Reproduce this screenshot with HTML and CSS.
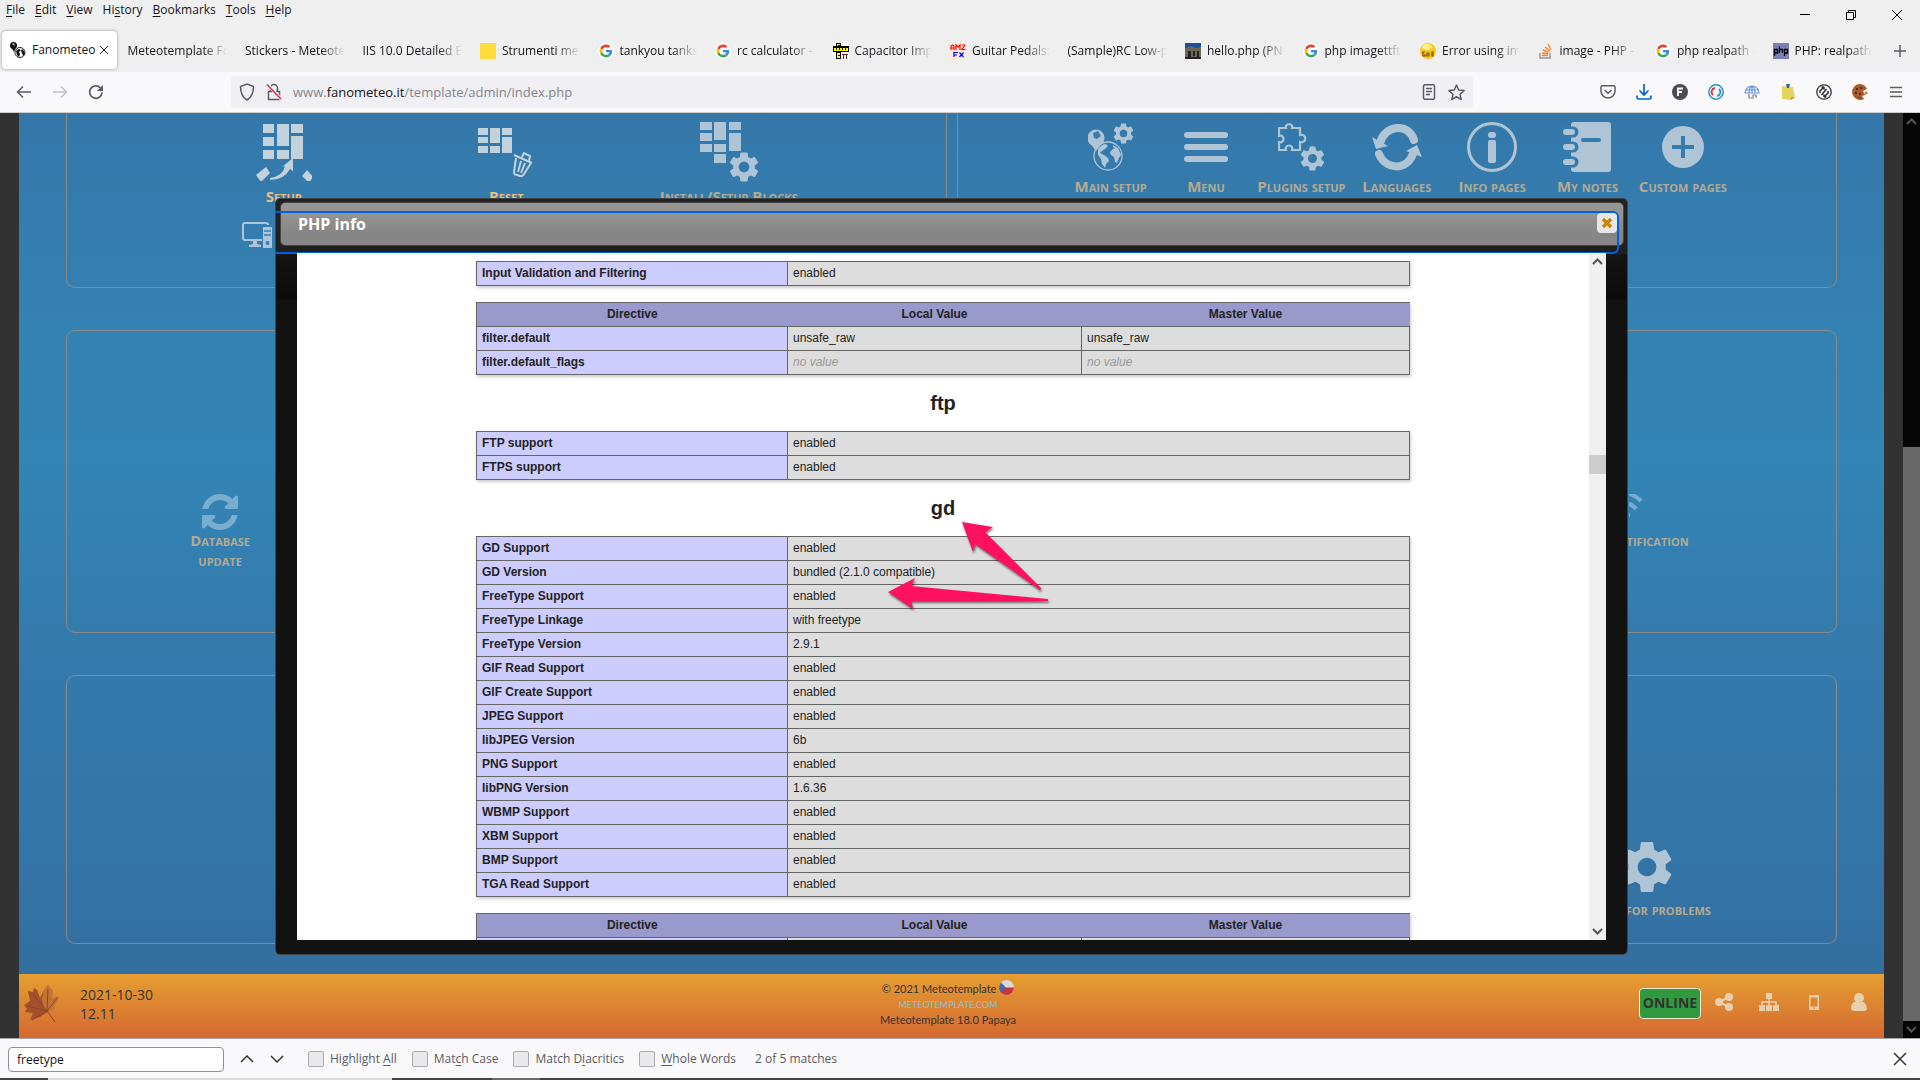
FILE: index.html
```html
<!DOCTYPE html>
<html lang="en">
<head>
<meta charset="utf-8">
<title>Fanometeo</title>
<link rel="stylesheet" href="styles.css">
</head>
<body>
<svg class="sprite" aria-hidden="true">
  <symbol id="gear" viewBox="2 2 20 20"><path fill-rule="evenodd" d="M19.14 12.94c.04-.3.06-.61.06-.94 0-.32-.02-.64-.07-.94l2.03-1.58c.18-.14.23-.41.12-.61l-1.92-3.32c-.12-.22-.37-.29-.59-.22l-2.39.96c-.5-.38-1.03-.7-1.62-.94L14.4 2.81c-.04-.24-.24-.41-.48-.41h-3.84c-.24 0-.43.17-.47.41L9.25 5.35c-.59.24-1.13.57-1.62.94l-2.39-.96c-.22-.08-.47 0-.59.22L2.74 8.87c-.12.21-.08.47.12.61l2.03 1.58c-.05.3-.09.63-.09.94s.02.64.07.94l-2.03 1.58c-.18.14-.23.41-.12.61l1.92 3.32c.12.22.37.29.59.22l2.39-.96c.5.38 1.03.7 1.62.94l.36 2.54c.05.24.24.41.48.41h3.84c.24 0 .44-.17.47-.41l.36-2.54c.59-.24 1.13-.56 1.62-.94l2.39.96c.22.08.47 0 .59-.22l1.92-3.32c.12-.22.07-.47-.12-.61zM12 15.6a3.6 3.6 0 1 1 0-7.2 3.6 3.6 0 0 1 0 7.2z"/></symbol>
  <symbol id="google" viewBox="-6 -6 60 60"><circle cx="24" cy="24" r="30" fill="#fff"/><path fill="#EA4335" d="M24 9.500c3.540 0 6.710 1.220 9.210 3.600l6.850-6.850C35.900 2.380 30.470 0 24 0 14.620 0 6.510 5.380 2.560 13.220l7.980 6.190C12.430 13.720 17.740 9.500 24 9.500z"/><path fill="#4285F4" d="M46.980 24.550c0-1.570-.15-3.090-.38-4.550H24v9.020h12.940c-.58 2.960-2.260 5.480-4.780 7.180l7.730 6c4.510-4.180 7.090-10.360 7.090-17.650z"/><path fill="#FBBC05" d="M10.530 28.590c-.48-1.450-.76-2.990-.76-4.590s.27-3.140.76-4.590l-7.980-6.190C.92 16.460 0 20.120 0 24s.92 7.540 2.560 10.780z"/><path fill="#34A853" d="M24 48c6.480 0 11.930-2.130 15.890-5.810l-7.730-6c-2.150 1.450-4.920 2.300-8.160 2.300-6.260 0-11.570-4.220-13.470-9.910l-7.980 6.190C6.510 42.620 14.620 48 24 48z"/></symbol>
  <symbol id="globe" viewBox="0 0 30 30"><circle cx="15" cy="15" r="14" fill="none" stroke="currentColor" stroke-width="1.300"/><path d="M5 8c2-3 5-5 8-5l2 2-3 3-3 2-2 2 4 2 4 3 1 3-3 3-1 4-3-4-1-5-3-4zM20 4l5 3 3 7-2 3-2 5-2-1-1-5-3-2-1-3 3-3 2-1-2-1z"/></symbol>
</svg>

<header class="browser">
  <div class="titlebar">
    <nav class="menubar">
      <button><u>F</u>ile</button><button><u>E</u>dit</button><button><u>V</u>iew</button><button>Hi<u>s</u>tory</button><button><u>B</u>ookmarks</button><button><u>T</u>ools</button><button><u>H</u>elp</button>
    </nav>
    <div class="window-buttons">
      <button aria-label="Minimize"><svg width="12" height="12"><path d="M1 5.500h10" stroke="#000"/></svg></button>
      <button aria-label="Restore"><svg width="12" height="12" fill="none" stroke="#000"><path d="M1.500 3.500h7v7h-7zM3.500 3v-1.500h7v7H9"/></svg></button>
      <button aria-label="Close window"><svg width="12" height="12" fill="none" stroke="#000"><path d="M1 1l10 10M11 1L1 11"/></svg></button>
    </div>
  </div>
  <div class="tabbar">
    <div class="tabs">
      <div class="tab active"><svg class="fav" viewBox="0 0 16 16"><circle cx="10" cy="10.500" r="5" fill="#fff" stroke="#222"/><path d="M6 9l3-2 2 1-2 2 1 2-1 3-2-2zM12 7l2 2 1 3-2 2-1-3-1-2z" fill="#111"/><circle cx="3.500" cy="3.500" r="3.500" fill="#111"/><path d="M1 5l5 0-2 5z" fill="#111"/><path d="M2 2l2-1 1 3z" fill="#ccc"/></svg><span>Fanometeo</span><button class="tab-close" aria-label="Close tab"><svg width="10" height="10" stroke="#222" fill="none"><path d="M1 1l8 8M9 1L1 9"/></svg></button></div>
      <div class="tab"><span>Meteotemplate Fo</span></div>
      <div class="tab"><span>Stickers - Meteote</span></div>
      <div class="tab"><span>IIS 10.0 Detailed Er</span></div>
      <div class="tab"><svg class="fav" viewBox="0 0 16 16"><path fill="#ffdc3c" d="M0 0h16v16H0z"/></svg><span>Strumenti met</span></div>
      <div class="tab"><svg class="fav"><use href="#google"/></svg><span>tankyou tanks</span></div>
      <div class="tab"><svg class="fav"><use href="#google"/></svg><span>rc calculator -</span></div>
      <div class="tab"><svg class="fav" viewBox="0 0 16 16"><path fill="#fff" d="M0 0h16v16H0z"/><path d="M0 3h16v6H0zM3 0h5v3H3zM3 9h5v7H3z"/><path fill="#ff0" d="M1 5h14v3H1zM4 1h3v1H5v1H4zM4 10h3v5H4z"/><path stroke="#000" d="M3.500 5v2M6.500 5v2M9.500 5v2M12.500 5v2M5 12.500h2" /><path d="M9 11h6v1h-1v4h-1v-4h-2v4h-1v-4H9z" fill="#622"/></svg><span>Capacitor Imp</span></div>
      <div class="tab"><svg class="fav" viewBox="0 0 16 16"><path fill="#ffead7" d="M0 0h16v16H0z"/><path fill="none" stroke="#f00" stroke-width="1.200" d="M1 7V3l1.500-1L4 3v4M1 5h3M6 7V2l2 2 2-2v5M12 2h3l-3 4.500h3.500"/><path fill="none" stroke="#00f" stroke-width="1.200" d="M4 14V9.500h4M4 12h3M9.500 9.500l4 4.500M13.500 9.500l-4 4.500"/></svg><span>Guitar Pedals:</span></div>
      <div class="tab"><span>(Sample)RC Low-p</span></div>
      <div class="tab"><svg class="fav" viewBox="0 0 16 16"><path fill="#1d4f96" d="M0 0h16v7H0z"/><path fill="#6d6558" d="M0 6l5-3 6 2 5-1v12H0z"/><path d="M3 15V8h3v7zM8 13V8h2v5zM12 14V8h2v6zM0 14h16v2H0z" fill="#222"/></svg><span>hello.php (PN</span></div>
      <div class="tab"><svg class="fav"><use href="#google"/></svg><span>php imagettft</span></div>
      <div class="tab"><svg class="fav" viewBox="0 0 16 16"><circle cx="8" cy="8" r="8" fill="#ffc61a"/><ellipse cx="7" cy="4" rx="5" ry="3" fill="#fff08a"/><path fill="none" stroke="#7a5410" stroke-width="1.200" d="M5 9H3v4h2v-2M7 10h2v3H7zM14 9h-2v4h2M12 11h2"/></svg><span>Error using im</span></div>
      <div class="tab"><svg class="fav" viewBox="0 0 16 16" fill="none"><path stroke="#999" stroke-width="1.500" d="M2 10v5h10v-5"/><path stroke="#f48024" stroke-width="1.400" d="M4 12.500h6M4 10l6 .8M5 7l6 2.300M7 4l5 4M10 1l3 5.500"/></svg><span>image - PHP -</span></div>
      <div class="tab"><svg class="fav"><use href="#google"/></svg><span>php realpath -</span></div>
      <div class="tab"><svg class="fav" viewBox="0 0 16 16"><path fill="#7b7fb5" d="M0 0h16v16H0z"/><path fill="none" stroke="#000" stroke-width="1.300" d="M1.500 13V6.500h3V10h-3M6.500 3.500V10M6.500 6.500h3V10M11.500 13V6.500h3V10h-3"/></svg><span>PHP: realpath</span></div>
    </div>
    <button class="new-tab" aria-label="New tab"><svg width="14" height="14" stroke="#5b5b66" stroke-width="1.500"><path d="M7 1v12M1 7h12"/></svg></button>
  </div>
  <div class="navbar">
    <div class="nav-buttons">
      <button aria-label="Back"><svg width="16" height="16" viewBox="0 0 16 16" fill="none" stroke="#5b5b66" stroke-width="1.500"><path d="M15 8H2M7 2.500L1.500 8 7 13.500"/></svg></button>
      <button aria-label="Forward"><svg width="16" height="16" viewBox="0 0 16 16" fill="none" stroke="#c0c0c6" stroke-width="1.500"><path d="M1 8h13M9 2.500L14.500 8 9 13.500"/></svg></button>
      <button aria-label="Reload"><svg width="16" height="16" viewBox="0 0 16 16" fill="none" stroke="#5b5b66" stroke-width="1.700"><path d="M14 8.500A6.200 6.200 0 1 1 12.500 4"/><path fill="#5b5b66" stroke="none" d="M15 1v6H9z"/></svg></button>
    </div>
    <div class="urlbar">
      <svg width="16" height="18" viewBox="0 0 16 18" fill="none" stroke="#5b5b66" stroke-width="1.500"><path d="M8 1l6.500 2.500C14.500 11 12.500 14.500 8 17 3.500 14.500 1.500 11 1.500 3.500z"/></svg>
      <svg width="16" height="18" viewBox="0 0 16 18" fill="none" stroke="#5b5b66" stroke-width="1.500"><path d="M4.500 8V5a3.500 3.500 0 0 1 7 0v3M2.500 8.500h11v8h-11z"/><path stroke="#f9f9fb" stroke-width="3" d="M2 2l13 14"/><path stroke="#e22850" d="M1 1.500l14 14.500"/></svg>
      <div class="url">www.<b>fanometeo.it</b>/template/admin/index.php</div>
      <svg width="16" height="16" viewBox="0 0 16 16" fill="none" stroke="#5b5b66" stroke-width="1.500"><path d="M4 .8h8q1.500 0 1.500 1.500v11.500q0 1.500-1.500 1.500H4q-1.500 0-1.500-1.500V2.300Q2.500.8 4 .8zM5 4.500h6M5 7.500h6M5 10.500h4"/></svg>
      <svg width="17" height="17" viewBox="0 0 16 16" fill="none" stroke="#5b5b66" stroke-width="1.400" stroke-linejoin="round"><path d="M8 1l2.100 4.700 5 .5-3.800 3.400 1.100 5L8 12l-4.400 2.600 1.100-5L.9 6.200l5-.5z"/></svg>
    </div>
    <div class="extensions">
      <svg viewBox="0 0 16 16" fill="none" stroke="#5b5b66" stroke-width="1.500"><path d="M2.500 1.800h11q1.500 0 1.500 1.500V7a7 7 0 0 1-14 0V3.300q0-1.500 1.500-1.500zM4.500 6L8 9.300 11.500 6"/></svg>
      <svg viewBox="0 0 16 16" fill="none" stroke="#0061e0" stroke-width="1.700"><path d="M8 0v11M3.500 6.500L8 11l4.500-4.500M1 11.500v2q0 1.500 1.500 1.500h11q1.500 0 1.500-1.500v-2"/></svg>
      <svg viewBox="0 0 16 16"><circle cx="8" cy="8" r="8" fill="#4c4c56"/><path d="M6 12V4.500h5M6 8h4" fill="none" stroke="#fff" stroke-width="1.800"/></svg>
      <svg viewBox="0 0 16 16" fill="none"><circle cx="8" cy="8" r="7.200" stroke="#2b8fc9" stroke-width="1.500"/><path d="M7 4a4 4 0 0 0-2 7" stroke="#d33" stroke-width="1.800"/><path d="M9 12a4 4 0 0 0 2-7" stroke="#2b8fc9" stroke-width="1.800"/></svg>
      <svg viewBox="0 0 16 16" fill="none" stroke="#6d95df" stroke-width="1.200"><path d="M1 9a7 7 0 0 1 14 0zM1.500 6h13M8 2v7M5 9c0-3 1-6 3-7 2 1 3 4 3 7"/><path stroke="#888" d="M5 10v4h3M9 15v-4h3v3"/></svg>
      <svg viewBox="0 0 16 16"><path fill="#e5d35f" d="M2 2l11 1 2 11-4 2-9-1z"/><path fill="#c4ac37" d="M15 13l-4 3v-3z"/><path fill="#2c61b2" d="M6 0h4l-1 4H7z"/></svg>
      <svg viewBox="0 0 16 16" fill="none"><circle cx="8" cy="8" r="7.200" stroke="#333" stroke-width="1.300"/><path stroke="#333" stroke-width="1.600" d="M4 9V7l4-4M8 3H5.500M8 3v2.500M12 7v2l-4 4M8 13h2.500M8 13v-2.500M10.500 5l-5 6"/></svg>
      <svg viewBox="0 0 16 16"><path fill="#a75c2e" d="M8 0a8 8 0 1 0 4 15l-2-3 3-1-2-4 4-2A8 8 0 0 0 8 0z"/><path fill="#5d2d10" d="M4 4h2v2H4zM8 3h2v2H8zM3 8h2v2H3zM7 9h2v2H7zM6 13h2v1H6z"/><circle cx="14" cy="9" r="1.500" fill="#bd7a4a"/></svg>
      <svg viewBox="0 0 16 16" stroke="#5b5b66" stroke-width="1.500"><path d="M2 3.500h12M2 8h12M2 12.500h12"/></svg>
    </div>
  </div>
</header>

<div class="viewport">
  <div class="site">
    <main class="panels">
      <section class="panel cut">
        <div class="grid three">
          <a href="#" class="tile tall hot"><span class="pic"><svg width="56" height="58" viewBox="0 0 56 58"><path d="M7 1h11v9H7zM21 1h12v22H21zM35 1h12v9H35zM7 14h11v9H7zM35 13h12v23H35zM7 27h11v9H7zM21 27h12v9H21zM0 52l10-8 4 6-9 9zM46 53l5-6 6 7-4 6z"/><path d="M14 55q13-2 15-12l-3 1 11-9v13l-3-2q-6 11-20 11z"/></svg></span>Setup</a>
          <a href="#" class="tile tall hot"><span class="pic"><svg width="56" height="50" viewBox="0 0 56 50"><path d="M0 1h10v7H0zM12 1h10v15H12zM24 1h10v7H24zM0 10h10v6H0zM24 10h10v16H24zM0 19h10v7H0zM12 19h10v7H12z"/><path fill="none" stroke="currentColor" stroke-width="2" d="M38 31l-2 14q0 3 3 3l3 1q2 1 4-2l7-11M36 28l18 8M44 30l2-4 6 3-1 5M43 34l-3 11M47 36l-4 10"/></svg></span>Reset</a>
          <a href="#" class="tile tall"><span class="pic"><svg width="58" height="60" viewBox="0 0 58 60"><path d="M0 0h12v8H0zM14 0h12v18H14zM29 0h12v8H29zM0 11h12v8H0zM29 11h12v18H29zM0 22h12v8H0zM14 22h12v8H14zM14 32h12v9H14z"/><svg x="29" y="30" width="30" height="30"><use href="#gear"/></svg></svg></span>Install/Setup Blocks</a>
          <a href="#" class="computer" aria-label="System"><svg width="30" height="26" viewBox="0 0 30 26"><path fill="none" stroke="currentColor" stroke-width="2" d="M20 18H3q-2 0-2-2V3q0-2 2-2h21q2 0 2 2"/><path d="M11 18h4v4l4 1v2H7v-2l4-1zM21 5h9v21h-9z"/><path stroke="#3680b1" stroke-width="1.500" d="M22 9h7M22 13h7"/><circle cx="25.500" cy="21" r="2" fill="#3680b1"/></svg></a>
        </div>
      </section>
      <section class="panel cut">
        <div class="grid seven">
          <a href="#" class="tile"><span class="pic"><svg width="46" height="48" viewBox="0 0 46 48"><svg x="5" y="18" width="30" height="30"><use href="#globe"/></svg><circle cx="8" cy="15" r="8.500"/><path d="M1 19l7 9 7-9z"/><path d="M5 10l5-2 3 5-4 3-3-1z" fill="#357bad"/><svg x="25" y="0" width="21" height="21"><use href="#gear"/></svg></svg></span>Main setup</a>
          <a href="#" class="tile"><span class="pic"><svg width="44" height="32" viewBox="0 0 44 32" stroke="currentColor" stroke-width="6" stroke-linecap="round"><path d="M3 4h38M3 16h38M3 28h38"/></svg></span>Menu</a>
          <a href="#" class="tile"><span class="pic"><svg width="46" height="48" viewBox="0 0 46 48"><path fill="none" stroke="currentColor" stroke-width="2.200" d="M1 5h7c-2-5 8-5 6 0h8v7c7-2 7 9 0 7v8h-8c2-6-8-6-6 0H1v-8c6 2 6-8 0-6z"/><svg x="22" y="23" width="25" height="25"><use href="#gear"/></svg></svg></span>Plugins setup</a>
          <a href="#" class="tile"><span class="pic"><svg width="50" height="48" viewBox="0 0 50 48"><path fill="none" stroke="currentColor" stroke-width="8" stroke-linecap="round" d="M8 20C13 1 37 0 42 17M7 31c6 15 27 18 34 0"/><path d="M0 14l16 9-12 3zM50 34l-16-6 11-6z"/></svg></span>Languages</a>
          <a href="#" class="tile"><span class="pic"><svg width="50" height="50" viewBox="0 0 50 50"><circle cx="25" cy="25" r="23.500" fill="none" stroke="currentColor" stroke-width="3"/><rect x="21" y="10" width="8" height="6" rx="3"/><rect x="21" y="18" width="8" height="23" rx="2"/></svg></span>Info pages</a>
          <a href="#" class="tile"><span class="pic"><svg width="48" height="50" viewBox="0 0 48 50"><rect x="8" width="40" height="50" rx="3"/><path fill="none" stroke="#357bad" stroke-width="11" stroke-linecap="round" d="M2 10h8M2 25h8M2 40h8"/><path fill="none" stroke="currentColor" stroke-width="6" stroke-linecap="round" d="M3 10h6M3 25h6M3 40h6"/><path stroke="#357bad" stroke-width="4" stroke-linecap="round" d="M20 18h16"/></svg></span>My notes</a>
          <a href="#" class="tile"><span class="pic"><svg width="42" height="42" viewBox="0 0 42 42"><circle cx="21" cy="21" r="21"/><path stroke="#357bad" stroke-width="4" d="M21 10v22M10 21h22"/></svg></span>Custom pages</a>
        </div>
      </section>
      <section class="panel middle">
        <div class="grid seven">
          <a href="#" class="tile small"><span class="pic faint"><svg width="36" height="36" viewBox="0 0 1536 1536"><path d="M1511 928q0 5-1 7-64 268-268 434.500T764 1536q-146 0-282.500-55T238 1324l-129 129q-19 19-45 19t-45-19-19-45V960q0-26 19-45t45-19h448q26 0 45 19t19 45-19 45l-137 137q71 66 161 102t187 36q134 0 250-65t186-179q11-17 53-117 8-23 30-23h192q13 0 22.500 9.500t9.500 22.500zm25-800v448q0 26-19 45t-45 19h-448q-26 0-45-19t-19-45 19-45l138-138Q969 256 768 256q-134 0-250 65T332 500q-11 17-53 117-8 23-30 23H50q-13 0-22.500-9.500T18 608v-7q65-268 270-434.500T768 0q146 0 284 55.500T1297 212l130-129q19-19 45-19t45 19 19 45z"/></svg></span>Database update</a>
        </div>
      </section>
      <section class="panel middle">
        <div class="grid four">
          <a href="#" class="tile small last"><span class="pic faint"><svg width="36" height="36" viewBox="16 4 36 36"><path fill="none" stroke="currentColor" stroke-width="4" d="M0 12Q13-4 28 11M6 19q9-10 17 0"/><circle cx="14" cy="25" r="3"/></svg></span>Notification</a>
        </div>
      </section>
      <section class="panel lower"></section>
      <section class="panel lower">
        <div class="grid four">
          <a href="#" class="tile last"><span class="pic"><svg width="52" height="52"><use href="#gear"/></svg></span>Check for problems</a>
        </div>
      </section>
    </main>
    <footer class="footer">
      <div class="when">
        <svg width="38" height="38" viewBox="0 0 38 38"><path fill="#a5502c" d="M25 0l-5 7-3 6-3-8-3-2-1 4-5-1 2 10-6 4 3 4-2 3 8 1-3 7 10-3 9-6z"/><path fill="#c17434" d="M25 0l-5 7-1 7 2 10 5 3 6-3-1-3 5-8-1-2-6 2 1-7z"/><path d="M4 21l20 5 8 11M24 26l1-22M24 26L9 8M24 26l10-13M24 26L9 35" fill="none" stroke="#8d4426"/></svg>
        <div>2021-10-30<br>12.11</div>
      </div>
      <div class="credits">
        <div>© 2021 Meteotemplate <svg class="flag" width="15" height="15" viewBox="0 0 15 15"><circle cx="7.500" cy="7.500" r="7.500" fill="#d9d9d9"/><path fill="#c93340" d="M0 7.500h15a7.500 7.500 0 0 1-15 0z"/><path fill="#4968a8" d="M2 2.500l5 5-5 5a7.500 7.500 0 0 1 0-10z"/></svg></div>
        <a href="#">METEOTEMPLATE.COM</a>
        <div>Meteotemplate 18.0 Papaya</div>
      </div>
      <div class="tools">
        <button class="online">ONLINE</button>
        <a href="#" aria-label="Share"><svg width="18" height="18" viewBox="0 0 18 18"><path stroke="currentColor" stroke-width="2.500" d="M4 9l10-5M4 9l10 5"/><circle cx="4" cy="9" r="4"/><circle cx="14" cy="4" r="4"/><circle cx="14" cy="14" r="4"/></svg></a>
        <a href="#" aria-label="Site map"><svg width="20" height="18" viewBox="0 0 20 18"><path d="M7 0h6v6H7zM0 12h6v6H0zM7 12h6v6H7zM14 12h6v6h-6z"/><path fill="none" stroke="currentColor" stroke-width="1.500" d="M10 6v6M3 12V9h14v3"/></svg></a>
        <a href="#" aria-label="Mobile"><svg width="10" height="15" viewBox="0 0 10 15"><path fill-rule="evenodd" d="M1 0h8q1 0 1 1v13q0 1-1 1H1q-1 0-1-1V1q0-1 1-1zM1.500 2.500v9h7v-9zM4 12.500v1.200h2v-1.200z"/></svg></a>
        <a href="#" aria-label="User"><svg width="16" height="18" viewBox="0 0 16 18"><path d="M3 9h10q3 3 3 7-1 2-3 2H3q-2 0-3-2 0-5 3-7z"/><circle cx="8" cy="5" r="5"/></svg></a>
      </div>
    </footer>
  </div>
  <div class="scroll page-scroll"><svg width="11" height="7"><path d="M1 6l4.500-4.500L10 6"/></svg><i></i><svg width="11" height="7"><path d="M1 1l4.500 4.500L10 1"/></svg></div>

  <div class="modal" role="dialog" aria-label="PHP info">
    <div class="modal-head"><h1>PHP info</h1></div>
    <div class="focus"><button aria-label="Close"><svg width="10" height="10" stroke="#cd8500" stroke-width="3.500"><path d="M1 1l8 8M9 1L1 9"/></svg></button></div>
    <div class="frame">
      <div class="phpinfo">
        <table><tr><th scope="row">Input Validation and Filtering</th><td>enabled</td></tr></table>
        <table>
          <thead><tr><th>Directive</th><th class="local">Local Value</th><th>Master Value</th></tr></thead>
          <tbody><tr><th scope="row">filter.default</th><td>unsafe_raw</td><td>unsafe_raw</td></tr>
          <tr><th scope="row">filter.default_flags</th><td><i>no value</i></td><td><i>no value</i></td></tr></tbody>
        </table>
        <h2>ftp</h2>
        <table><tr><th scope="row">FTP support</th><td>enabled</td></tr><tr><th scope="row">FTPS support</th><td>enabled</td></tr></table>
        <h2>gd</h2>
        <table>
          <tr><th scope="row">GD Support</th><td>enabled</td></tr>
          <tr><th scope="row">GD Version</th><td>bundled (2.1.0 compatible)</td></tr>
          <tr><th scope="row">FreeType Support</th><td>enabled</td></tr>
          <tr><th scope="row">FreeType Linkage</th><td>with freetype</td></tr>
          <tr><th scope="row">FreeType Version</th><td>2.9.1</td></tr>
          <tr><th scope="row">GIF Read Support</th><td>enabled</td></tr>
          <tr><th scope="row">GIF Create Support</th><td>enabled</td></tr>
          <tr><th scope="row">JPEG Support</th><td>enabled</td></tr>
          <tr><th scope="row">libJPEG Version</th><td>6b</td></tr>
          <tr><th scope="row">PNG Support</th><td>enabled</td></tr>
          <tr><th scope="row">libPNG Version</th><td>1.6.36</td></tr>
          <tr><th scope="row">WBMP Support</th><td>enabled</td></tr>
          <tr><th scope="row">XBM Support</th><td>enabled</td></tr>
          <tr><th scope="row">BMP Support</th><td>enabled</td></tr>
          <tr><th scope="row">TGA Read Support</th><td>enabled</td></tr>
        </table>
        <table>
          <thead><tr><th>Directive</th><th class="local">Local Value</th><th>Master Value</th></tr></thead>
          <tbody><tr><th scope="row"></th><td></td><td></td></tr></tbody>
        </table>
        <svg class="arrows" width="170" height="100" viewBox="880 515 170 100"><path d="M962 522l31 5-8 5 56 56-1 2-65-46-2 8zM888 592l27-14-4 8 137 13v2l-137 0 2 8z"/></svg>
      </div>
      <div class="scroll frame-scroll"><svg width="11" height="7"><path d="M1 6l4.500-4.500L10 6"/></svg><i></i><svg width="11" height="7"><path d="M1 1l4.500 4.500L10 1"/></svg></div>
    </div>
  </div>
</div>

<form class="findbar">
  <input class="find" type="text" value="freetype" aria-label="Find in page">
  <button type="button" aria-label="Previous"><svg width="14" height="14"><path d="M1 10l6-6 6 6"/></svg></button>
  <button type="button" aria-label="Next"><svg width="14" height="14"><path d="M1 4l6 6 6-6"/></svg></button>
  <div class="options">
    <label><input type="checkbox"><span>Highlight <u>A</u>ll</span></label>
    <label><input type="checkbox"><span>Mat<u>c</u>h Case</span></label>
    <label><input type="checkbox"><span>Match D<u>i</u>acritics</span></label>
    <label><input type="checkbox"><span><u>W</u>hole Words</span></label>
    <span>2 of 5 matches</span>
  </div>
  <button type="button" class="find-close" aria-label="Close find bar"><svg width="14" height="14"><path d="M1 1l12 12M13 1L1 13"/></svg></button>
</form>
<div class="taskbar"><i></i><b></b></div>
</body>
</html>
```

FILE: styles.css
```css
* { box-sizing: border-box; }
body {
  margin: 0;
  height: 100vh;
  display: flex;
  flex-direction: column;
  overflow: hidden;
  font: 12px/16px "Open Sans", "Noto Sans", sans-serif;
  color: #15141a;
}
button { border: 0; background: none; padding: 0; font: inherit; color: inherit; display: flex; align-items: center; justify-content: center; }
a { color: inherit; text-decoration: none; }
svg { flex: none; }
u { text-underline-offset: 2px; }
.sprite { position: absolute; width: 0; height: 0; }

/* browser chrome */
.titlebar { height: 29px; background: #efefef; display: flex; justify-content: space-between; }
.menubar { display: flex; gap: 10px; padding: 2px 6px; align-items: flex-start; }
.menubar button { display: block; }
.window-buttons { display: flex; gap: 34px; padding: 0 17px; align-items: center; }
.tabbar { height: 43px; background: #efefef; display: flex; }
.tabs { flex: 1; display: grid; grid-template-columns: repeat(16, minmax(0, 1fr)); }
.tab { display: flex; align-items: center; gap: 6px; padding: 0 8px 0 10px; height: 43px; }
.tab span { flex: 1; min-width: 0; overflow: hidden; white-space: nowrap; mask-image: linear-gradient(to left, transparent, #000 24px); }
.tab.active { height: 38px; margin: 2px 1px 3px 2px; padding: 0 8px; background: #fff; border-radius: 4px; box-shadow: 0 0 3px #8a8a96; gap: 6px; }
.tab.active span { mask-image: none; flex: none; }
.tab-close { margin-left: -3px; }
.fav { width: 16px; height: 16px; }
.new-tab { width: 40px; padding-right: 1px; }
.navbar { height: 41px; background: #f9f9fb; border-bottom: 1px solid #ccc; display: flex; align-items: center; }
.nav-buttons { display: flex; gap: 20px; padding-left: 16px; width: 231px; }
.urlbar { flex: 1; height: 32px; background: #f0f0f4; border-radius: 4px; display: flex; align-items: center; gap: 11px; padding: 0 8px; }
.url { flex: 1; font-size: 13px; line-height: 18px; color: #85858d; }
.url b { font-weight: 400; color: #15141a; }
.extensions { display: flex; gap: 20px; padding: 0 16px 0 127px; }
.extensions svg { width: 16px; height: 16px; }

/* web page */
.viewport { flex: 1; min-height: 0; position: relative; display: flex; overflow: hidden; background: #323232; }
.site { flex: 1; margin: 0 19px; display: flex; flex-direction: column; background: linear-gradient(#3478aa, #3480b1 20%, #3385b7 37%, #347aab 58%, #3479ab 64%, #3375a7 80%, #336f9f 93%); }
.panels { flex: 1; padding: 0 47px; display: grid; grid-template-columns: 1fr 1fr; column-gap: 10px; row-gap: 42px; align-content: start; }
.panel { border: 1px solid #8b8988; border-radius: 9px; }
.cut { border-top: 0; border-radius: 0 0 9px 9px; height: 175px; }
.middle { min-height: 303px; padding-top: 159px; }
.lower { min-height: 269px; padding-top: 159px; }
.grid { width: 76%; margin: 0 auto; display: grid; justify-items: center; }
.three { grid-template-columns: repeat(3, 1fr); }
.seven { grid-template-columns: repeat(7, 1fr); }
.four { grid-template-columns: repeat(4, 1fr); }
.tile { display: flex; flex-direction: column; align-items: center; text-align: center; color: #b3aa93; font: 700 15px/20px "Open Sans", "Noto Sans", sans-serif; font-variant: small-caps; white-space: nowrap; }
.tile.last { grid-column: 4; }
.pic { height: 64px; display: flex; align-items: center; color: #afc5d6; fill: currentColor; }
.pic.faint { color: #78afd0; }
.cut .pic { height: 63px; padding-top: 4px; }
.cut .tall .pic { height: 73px; padding-top: 4px; }
.small { white-space: normal; }
.small .pic { height: 40px; padding-top: 4px; }
.hot { color: #e9bd7d; }
.hot .pic { color: #c2d2dd; }
.computer { color: #afc5d6; fill: currentColor; padding-top: 16px; justify-self: start; margin-left: 70px; }

.footer { height: 64px; display: flex; align-items: center; justify-content: space-between; background: linear-gradient(#e59e31, #d46931); color: #333; }
.when { flex: 1; display: flex; gap: 19px; padding: 0 0 4px 4px; font-size: 14px; line-height: 19px; }
.credits { text-align: center; font: 11px/15px Lato, "Open Sans", sans-serif; padding-bottom: 6px; }
.credits a { color: #86c3da; font-size: 9px; }
.flag { vertical-align: -2px; }
.tools { flex: 1; display: flex; justify-content: flex-end; align-items: center; padding: 0 11px 8px 0; color: #e8cfae; fill: currentColor; }
.tools a { width: 45px; display: flex; justify-content: center; }
.tools a:last-child { width: 28px; margin-left: 9px; }
.online { height: 31px; width: 62px; background: #2f9a3e; border: 1px solid #f0e6d8; border-radius: 4px; color: #333; font-size: 14px; font-weight: 700; margin-top: 2px; }

.scroll { width: 17px; display: flex; flex-direction: column; align-items: center; padding: 5px 0; }
.scroll svg { fill: none; stroke: #555; stroke-width: 2; }
.scroll i { width: 17px; }
.page-scroll { background: #050505; justify-content: space-between; }
.page-scroll i { background: #686868; height: 574px; margin: auto 0 5px; }

/* dialog */
.modal { position: absolute; top: 85px; bottom: 83px; left: 275px; right: 292px; padding: 3px; display: flex; flex-direction: column; border: 1px solid #444; border-radius: 5px; background: linear-gradient(#222, #1f1f1f 55px, #141414 56px, #0b0b0b 100px, #121212 101px); }
.modal-head { height: 44px; margin-left: 1px; border: 1px solid #444; border-radius: 5px; background: linear-gradient(#959595, #939393 30%, #868686 70%); padding: 10px 17px; }
.modal-head h1 { margin: 0; font-size: 16px; line-height: 22px; color: #fff; }
.focus { position: absolute; top: 12px; left: -1px; right: 8px; height: 43px; border: 2px solid #0060df; border-left: 0; border-radius: 0 6px 6px 0; }
.focus button { position: absolute; top: 0; right: 0; width: 20px; height: 20px; border-radius: 4px; background: #e6e6e6; }
.frame { position: relative; flex: 1; min-height: 0; margin: 7px 18px 11px; background: #fff; display: flex; overflow: hidden; }
.phpinfo { position: relative; flex: 1; padding-top: 8px; font-family: "Liberation Sans", Arial, sans-serif; color: #222; }
.phpinfo table { width: 934px; margin: 0 auto 16px; border-collapse: collapse; table-layout: fixed; font-size: 12px; line-height: 15px; box-shadow: 1px 2px 3px #ccc; }
.phpinfo td { height: 24px; border: 1px solid #666; background: #ddd; padding: 4px 5px; }
.phpinfo th[scope] { width: 311px; height: 24px; border: 1px solid #666; background: #ccf; padding: 4px 5px; text-align: left; }
.phpinfo thead th { height: 24px; background: #99c; padding: 4px 5px; border-top: 1px solid #666; }
.phpinfo thead th:first-child { width: 311px; border-left: 1px solid #666; }
.phpinfo .local { width: 294px; }
.phpinfo td i { color: #999; }
.phpinfo h2 { margin: 16px 0; font-size: 20px; line-height: 24px; text-align: center; }
.arrows { position: absolute; left: 583px; top: 262px; fill: #ff1060; filter: drop-shadow(1px 2px 1px #0008); }
.frame-scroll { background: #f0f0f0; }
.frame-scroll i { background: #cdcdcd; height: 19px; margin: 190px 0 auto; }

/* find bar */
.findbar { height: 40px; margin: 0; background: #f9f9fb; border-top: 1px solid #a5a5a5; display: flex; align-items: center; padding: 1px 13px 0 8px; color: #5b5b66; }
.find { width: 216px; height: 25px; border: 1px solid #8f8f9d; border-radius: 4px; background: #fff; padding: 0 8px; font: inherit; color: #15141a; margin-right: 16px; }
.findbar svg { fill: none; stroke: #33333a; stroke-width: 1.500; }
.findbar button + button { margin-left: 16px; }
.options { flex: 1; display: flex; gap: 15px; padding-left: 24px; }
.options > span { padding-left: 4px; }
.options label { display: flex; gap: 6px; align-items: center; }
.options input { appearance: none; width: 16px; height: 16px; margin: 0; border: 1px solid #aaaab2; border-radius: 2px; background: #e9e9ed; }
.taskbar { height: 2px; background: #454545; display: flex; padding-left: 48px; gap: 100px; }
.taskbar i { width: 344px; background: #ddd; }
.taskbar b { width: 48px; background: #6a6a6a; }
```
